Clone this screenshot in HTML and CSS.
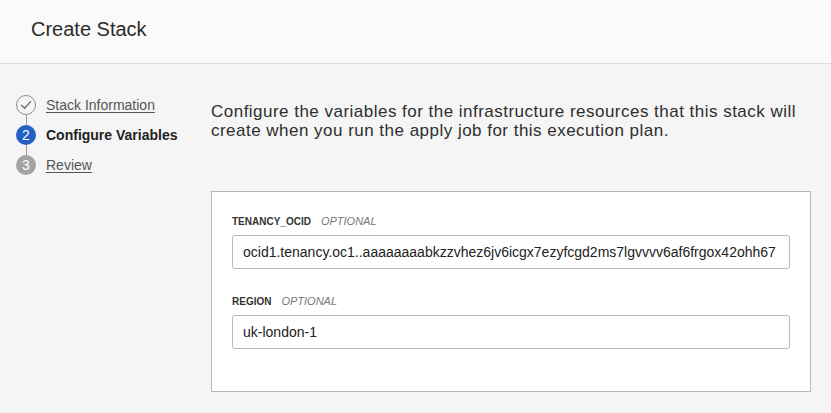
FILE: index.html
```html
<!DOCTYPE html>
<html lang="en">
<head>
<meta charset="utf-8">
<title>Create Stack</title>
<link rel="stylesheet" href="styles.css">
</head>
<body>
<header class="page-header">
  <h1 class="page-title">Create Stack</h1>
</header>
<div class="layout">
  <nav class="steps">
    <div class="step">
      <span class="step-icon step-done">
        <svg width="20" height="20" viewBox="0 0 20 20"><circle cx="10" cy="10" r="9.5" fill="none" stroke="#8c8c8c" stroke-width="1"/><path d="M5.6 10.2 L8.6 13.2 L14.6 6.6" fill="none" stroke="#6b6b6b" stroke-width="1.3" stroke-linecap="round" stroke-linejoin="round"/></svg>
      </span>
      <a class="step-link" href="#">Stack Information</a>
    </div>
    <div class="connector"></div>
    <div class="step">
      <span class="step-icon step-current">2</span>
      <span class="step-label-current">Configure Variables</span>
    </div>
    <div class="connector"></div>
    <div class="step">
      <span class="step-icon step-todo">3</span>
      <a class="step-link" href="#">Review</a>
    </div>
  </nav>
  <main class="content">
    <p class="intro">Configure the variables for the infrastructure resources that this stack will create when you run the apply job for this execution plan.</p>
    <section class="card">
      <div class="field">
        <div class="field-label"><span class="field-name">TENANCY_OCID</span><span class="field-opt">OPTIONAL</span></div>
        <div class="input">ocid1.tenancy.oc1..aaaaaaaabkzzvhez6jv6icgx7ezyfcgd2ms7lgvvvv6af6frgox42ohh67</div>
      </div>
      <div class="field">
        <div class="field-label"><span class="field-name">REGION</span><span class="field-opt">OPTIONAL</span></div>
        <div class="input">uk-london-1</div>
      </div>
    </section>
  </main>
</div>
</body>
</html>
```
FILE: styles.css
```css
* { box-sizing: border-box; }
html, body {
  margin: 0;
  padding: 0;
}
body {
  background: #f5f5f5;
  font-family: "Liberation Sans", Arial, Helvetica, sans-serif;
  color: #333;
  width: 831px;
  height: 413px;
  overflow: hidden;
}
.page-header {
  height: 64px;
  background: #fafafa;
  border-bottom: 1px solid #dcdcdc;
  padding: 0 31px;
  display: flex;
  align-items: center;
}
.page-title {
  margin: 0;
  font-size: 20px;
  font-weight: 400;
  color: #2b2b2b;
  line-height: 24px;
  padding-bottom: 6px;
}
.layout {
  display: flex;
}
.steps {
  width: 211px;
  flex: none;
  padding: 31px 0 0 16px;
  display: flex;
  flex-direction: column;
}
.step {
  display: flex;
  align-items: center;
  height: 20px;
}
.step-icon {
  width: 20px;
  height: 20px;
  flex: none;
  border-radius: 50%;
  display: flex;
  align-items: center;
  justify-content: center;
  font-size: 14px;
  color: #fff;
  margin-right: 10px;
}
.step-done svg { display: block; }
.step-current { background: #2360c4; }
.step-todo { background: #a3a3a3; }
.connector {
  width: 1px;
  height: 10px;
  background: #9a9a9a;
  margin-left: 9.5px;
}
.step-link {
  font-size: 14px;
  color: #555;
  text-decoration: underline;
  text-underline-offset: 2px;
}
.step-label-current {
  font-size: 14px;
  font-weight: 700;
  color: #222;
}
.content {
  padding-top: 38px;
}
.intro {
  margin: 0;
  width: 600px;
  font-size: 17px;
  line-height: 19px;
  letter-spacing: 0.48px;
  color: #2e2e2e;
}
.card {
  margin-top: 51px;
  width: 600px;
  background: #fff;
  border: 1px solid #b4b7bb;
  padding: 22px 20px 42px 20px;
  display: flex;
  flex-direction: column;
  gap: 25px;
}
.field-label {
  display: flex;
  align-items: baseline;
  gap: 10px;
  line-height: 14px;
  margin-bottom: 6px;
}
.field-name {
  font-size: 10px;
  font-weight: 700;
  color: #333;
}
.field-opt {
  font-size: 11px;
  font-style: italic;
  color: #777;
}
.input {
  height: 34px;
  border: 1px solid #b4b7bb;
  border-radius: 3px;
  padding: 0 10px;
  display: flex;
  align-items: center;
  font-size: 14px;
  color: #222;
  white-space: nowrap;
  overflow: hidden;
}
```
